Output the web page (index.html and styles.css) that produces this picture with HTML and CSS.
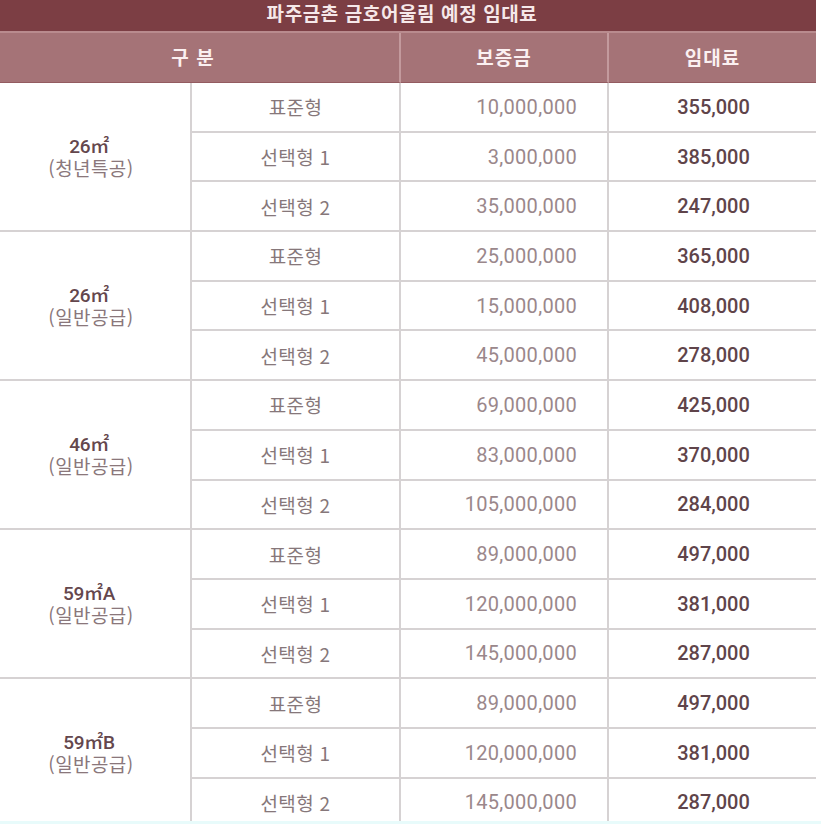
FILE: index.html
```html
<!DOCTYPE html>
<html lang="ko">
<head>
<meta charset="utf-8">
<title>파주금촌 금호어울림 예정 임대료</title>
<link rel="stylesheet" href="styles.css">
</head>
<body>
<div class="frame">
  <div class="viewport">
    <div class="rent-table">
      <div class="title">파주금촌 금호어울림 예정 임대료</div>
      <div class="head head-span">구 분</div>
      <div class="head">보증금</div>
      <div class="head last">임대료</div>

      <div class="group"><p class="label">26㎡<br>(청년특공)</p></div>
      <div class="cell type">표준형</div><div class="cell deposit">10,000,000</div><div class="cell rent">355,000</div>
      <div class="cell type">선택형 1</div><div class="cell deposit">3,000,000</div><div class="cell rent">385,000</div>
      <div class="cell type">선택형 2</div><div class="cell deposit">35,000,000</div><div class="cell rent">247,000</div>

      <div class="group"><p class="label">26㎡<br>(일반공급)</p></div>
      <div class="cell type">표준형</div><div class="cell deposit">25,000,000</div><div class="cell rent">365,000</div>
      <div class="cell type">선택형 1</div><div class="cell deposit">15,000,000</div><div class="cell rent">408,000</div>
      <div class="cell type">선택형 2</div><div class="cell deposit">45,000,000</div><div class="cell rent">278,000</div>

      <div class="group"><p class="label">46㎡<br>(일반공급)</p></div>
      <div class="cell type">표준형</div><div class="cell deposit">69,000,000</div><div class="cell rent">425,000</div>
      <div class="cell type">선택형 1</div><div class="cell deposit">83,000,000</div><div class="cell rent">370,000</div>
      <div class="cell type">선택형 2</div><div class="cell deposit">105,000,000</div><div class="cell rent">284,000</div>

      <div class="group"><p class="label">59㎡A<br>(일반공급)</p></div>
      <div class="cell type">표준형</div><div class="cell deposit">89,000,000</div><div class="cell rent">497,000</div>
      <div class="cell type">선택형 1</div><div class="cell deposit">120,000,000</div><div class="cell rent">381,000</div>
      <div class="cell type">선택형 2</div><div class="cell deposit">145,000,000</div><div class="cell rent">287,000</div>

      <div class="group"><p class="label">59㎡B<br>(일반공급)</p></div>
      <div class="cell type">표준형</div><div class="cell deposit">89,000,000</div><div class="cell rent">497,000</div>
      <div class="cell type">선택형 1</div><div class="cell deposit">120,000,000</div><div class="cell rent">381,000</div>
      <div class="cell type">선택형 2</div><div class="cell deposit">145,000,000</div><div class="cell rent">287,000</div>
    </div>
  </div>
  <div class="strip"></div>
</div>
</body>
</html>
```

FILE: styles.css
```css
html, body {
  margin: 0;
  padding: 0;
  background: #ffffff;
}

body {
  font-family: "Noto Sans CJK KR", "Noto Sans", sans-serif;
}

.frame {
  width: 821px;
  height: 824px;
  display: flex;
  flex-direction: column;
  overflow: hidden;
}

.viewport {
  height: 821px;
  overflow: hidden;
  flex: none;
}

.strip {
  height: 3px;
  flex: none;
  background: #e8fbfb;
}

.rent-table {
  width: 816px;
  display: grid;
  grid-template-columns: 192px 209px 208px 207px;
  grid-template-rows: 33px 50px;
  grid-auto-rows: 49.7px;
}

.title {
  grid-column: 1 / -1;
  box-sizing: border-box;
  background: #7c3e44;
  border-bottom: 2px solid #b98b8e;
  color: #f6e8e9;
  font-size: 19px;
  font-weight: 700;
  line-height: 25px;
  text-align: center;
  padding-right: 12px;
  letter-spacing: 0.6px;
}

.head {
  box-sizing: border-box;
  background: #a57377;
  border-right: 2px solid #c39a9d;
  border-bottom: 1px solid #935b60;
  color: #fbf0f1;
  font-size: 19px;
  font-weight: 700;
  letter-spacing: 1px;
  display: flex;
  align-items: center;
  justify-content: center;
  padding-bottom: 2px;
}

.head-span {
  grid-column: span 2;
  padding-right: 14px;
  letter-spacing: 0;
  word-spacing: 2px;
}

.head.last {
  border-right: none;
}

.group {
  grid-column: 1;
  grid-row: span 3;
  box-sizing: border-box;
  border-right: 2px solid #d6d2d3;
  border-bottom: 2px solid #d6d2d3;
  display: flex;
  align-items: center;
  justify-content: center;
  padding-right: 12px;
}

.label {
  margin: 0;
  flex: none;
  white-space: nowrap;
  text-align: center;
  font-size: 19px;
  line-height: 21px;
  color: #8a777b;
  letter-spacing: 0.4px;
}

.label::first-line {
  font-family: Roboto, "Noto Sans CJK KR", sans-serif;
  font-weight: 500;
  color: #64474d;
  letter-spacing: -0.3px;
}

.cell {
  box-sizing: border-box;
  border-bottom: 2px solid #d6d2d3;
  display: flex;
  align-items: center;
}

.type {
  border-right: 2px solid #d6d2d3;
  justify-content: center;
  font-size: 19px;
  color: #86777a;
  letter-spacing: 0.3px;
}

.deposit {
  border-right: 2px solid #d6d2d3;
  justify-content: flex-end;
  padding-right: 30px;
  font-family: Roboto, "Noto Sans", sans-serif;
  font-size: 20px;
  color: #9a878b;
  letter-spacing: 0.3px;
}

.rent {
  justify-content: center;
  font-family: Roboto, "Noto Sans", sans-serif;
  font-size: 20px;
  font-weight: 500;
  color: #5f444a;
  letter-spacing: 0;
  padding-left: 2px;
}
```
